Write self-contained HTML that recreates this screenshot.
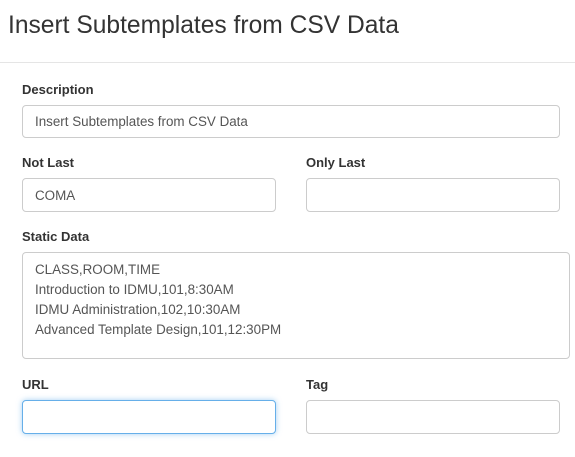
<!DOCTYPE html>
<html><head><style>
body{margin:0;width:575px;height:457px;background:#fff;font-family:"Liberation Sans",sans-serif;color:#333;position:relative;overflow:hidden}
.a{position:absolute}
h1{position:absolute;left:8px;top:12px;margin:0;font-size:24.6px;font-weight:normal;color:#333}
.hr{left:0;top:62px;width:575px;height:1px;background:#e5e5e5}
.l{font-size:13px;font-weight:bold;color:#333}
.i{border:1px solid #ccc;border-radius:4px;box-sizing:border-box;font-size:13.4px;color:#555;padding:0 12px;line-height:31px;background:#fff}
.f{border-color:#66afe9;box-shadow:0 0 6px rgba(102,175,233,.6)}
</style></head><body>
<h1>Insert Subtemplates from CSV Data</h1>
<div class="a hr"></div>
<div class="a l" style="left:22px;top:82px">Description</div>
<div class="a i" style="left:22px;top:105px;width:538px;height:33px">Insert Subtemplates from CSV Data</div>
<div class="a l" style="left:22px;top:155px">Not Last</div>
<div class="a l" style="left:306px;top:155px">Only Last</div>
<div class="a i" style="left:22px;top:178px;width:254px;height:34px;line-height:33px">COMA</div>
<div class="a i" style="left:306px;top:178px;width:254px;height:34px"></div>
<div class="a l" style="left:22px;top:229px">Static Data</div>
<div class="a i" style="left:22px;top:252px;width:548px;height:107px;line-height:20px;padding-top:7px">CLASS,ROOM,TIME<br>Introduction to IDMU,101,8:30AM<br>IDMU Administration,102,10:30AM<br>Advanced Template Design,101,12:30PM</div>
<div class="a l" style="left:22px;top:377px">URL</div>
<div class="a l" style="left:306px;top:377px">Tag</div>
<div class="a i f" style="left:22px;top:400px;width:254px;height:34px"></div>
<div class="a i" style="left:306px;top:400px;width:254px;height:34px"></div>
</body></html>
